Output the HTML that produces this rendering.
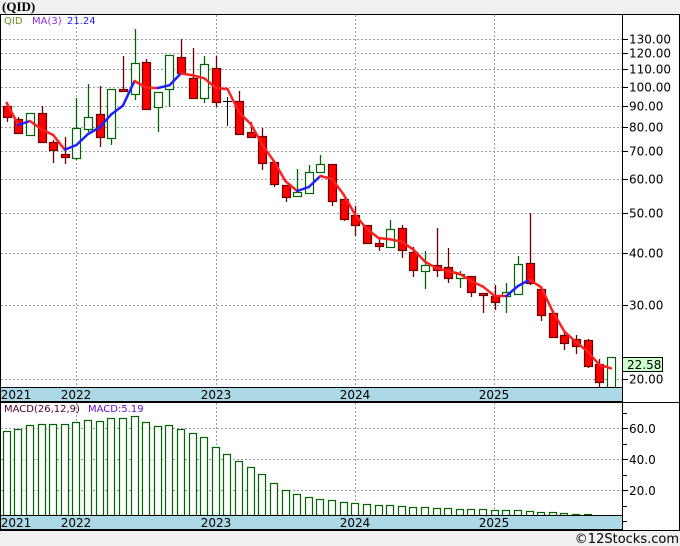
<!DOCTYPE html>
<html><head><meta charset="utf-8"><style>
html,body{margin:0;padding:0;background:#f0f0f0;}
svg{display:block;font-family:"DejaVu Sans","Liberation Sans",sans-serif;}
</style></head><body>
<svg id="s" width="680" height="546" xmlns="http://www.w3.org/2000/svg">
<rect x="0" y="0" width="680" height="546" fill="#f0f0f0"/>
<text x="2" y="11" font-size="13" font-weight="bold" font-family="Liberation Serif, serif" fill="#000">(QID)</text>
<rect x="0.5" y="14.5" width="679" height="516" fill="#fff" stroke="#000"/>
<g id="grid"></g>
<g id="cnd"></g>
<g id="ma"></g>
<g id="macd"></g>
<line x1="622.5" y1="14" x2="622.5" y2="531" stroke="#000"/>
<line x1="0" y1="402.5" x2="680" y2="402.5" stroke="#000"/>
<rect x="0.5" y="387.5" width="622" height="14" fill="#add8e6" stroke="#000"/>
<rect x="0.5" y="515.5" width="622" height="14" fill="#add8e6" stroke="#000"/>
<g id="ax" font-size="12" fill="#000"></g>
<text x="4" y="412" font-size="10" fill="#4b0030">MACD(26,12,9)</text>
<text x="88" y="412" font-size="10" fill="#6a0dcc">MACD:5.19</text>
<text x="4" y="24" font-size="10" fill="#6b8e23">QID</text>
<text x="32" y="24" font-size="10" fill="#8a2be2">MA(3)</text>
<text x="67" y="24" font-size="10" fill="#2020ff">21.24</text>
<rect x="622.5" y="357.5" width="40" height="14" fill="#ccffcc" stroke="#000"/>
<text x="627" y="369" font-size="12">22.58</text>
<text x="679" y="543" font-size="13" text-anchor="end" fill="#000">©12Stocks.com</text>
</svg>
<script>
var NS="http://www.w3.org/2000/svg";
function el(p,t,a,txt){var e=document.createElementNS(NS,t);for(var k in a)e.setAttribute(k,a[k]);if(txt)e.textContent=txt;document.getElementById(p).appendChild(e);return e;}
function Y(p){return 379-418.3*Math.log10(p/20);}
var lv=[130,120,110,100,90,80,70,60,50,40,30,20];
lv.forEach(function(p){var y=Math.round(Y(p))+0.5;el('grid','line',{x1:1,y1:y,x2:622,y2:y,stroke:'#999','stroke-dasharray':'2,2'});
el('grid','line',{x1:622,y1:y,x2:628,y2:y,stroke:'#000'});el('ax','text',{x:629,y:y+4},p.toFixed(2));});
[428,459,490].forEach(function(y,i){el('grid','line',{x1:1,y1:y+.5,x2:622,y2:y+.5,stroke:'#999','stroke-dasharray':'2,2'});el('grid','line',{x1:622,y1:y+.5,x2:628,y2:y+.5,stroke:'#000'});el('ax','text',{x:629,y:y+5},['60.0','40.0','20.0'][i]);});
[413,444,475,506,521].forEach(function(y){el('grid','line',{x1:622,y1:y+.5,x2:627,y2:y+.5,stroke:'#000'});});
[76,216,355,494].forEach(function(x){el('grid','line',{x1:x+.5,y1:15,x2:x+.5,y2:530,stroke:'#999','stroke-dasharray':'2,2'});});
var yrs=[[16,'2021'],[76,'2022'],[216,'2023'],[355,'2024'],[494,'2025']];
yrs.forEach(function(a){el('ax','text',{x:a[0],y:399,'text-anchor':'middle'},a[1]);el('ax','text',{x:a[0],y:527,'text-anchor':'middle'},a[1]);});
var C=[['r',106,117,102,122],['r',119,133,117,133],['g',113,135,113,135],['r',113,142,106,142],['r',142,150,140,163],['r',154,157,137,164],['g',128,158,98,160],['g',117,129,84,132],['r',114,137,86,147],['g',89,138,89,145],['r',89,91,56,91],['g',63,94,29,100],['r',62,109,59,110],['g',92,107,92,132],['g',55,89,55,107],['r',57,73,39,73],['r',78,98,48,98],['g',64,98,56,103],['r',68,102,56,107],['k',101,101,97,126],['r',101,134,91,134],['r',132,137,122,137],['r',136,163,128,170],['r',162,184,162,187],['r',185,197,185,202],['g',192,196,169,197],['g',172,193,165,194],['g',164,172,155,172],['r',164,201,164,206],['r',199,219,199,221],['r',215,225,206,236],['r',225,243,225,244],['r',243,246,238,251],['g',229,247,220,248],['r',228,250,225,258],['r',252,270,247,277],['g',265,271,251,289],['r',265,270,228,277],['r',267,278,248,283],['g',274,278,271,288],['r',276,292,276,297],['r',293,294,293,313],['r',296,302,285,310],['g',292,296,283,313],['g',264,294,256,295],['r',263,283,213,285],['r',289,315,289,321],['r',313,337,313,338],['r',335,343,333,350],['r',339,346,335,354],['r',340,366,339,368],['r',364,382,359,387],['g',357,387,357,387]];
var X=function(i){return 6.7+11.62*i;};
var closes=[];
C.forEach(function(c,i){var x=Math.round(X(i));
 if(c[0]=='k'){el('cnd','line',{x1:x+.5,y1:c[3],x2:x+.5,y2:c[4],stroke:'#000'});el('cnd','line',{x1:x-4,y1:c[1]+.5,x2:x+5,y2:c[1]+.5,stroke:'#000'});closes.push(c[1]);return;}
 var col=c[0]=='r'?'#6b0000':'#006400';
 el('cnd','line',{x1:x+.5,y1:c[3],x2:x+.5,y2:c[4],stroke:col,'stroke-width':1.3});
 el('cnd','rect',{x:x-3.5,y:c[1]+.5,width:8,height:Math.max(2,c[2]-c[1]),fill:c[0]=='r'?'#ff0000':'#fff',stroke:col,'stroke-width':1.2});
 closes.push(c[0]=='r'?c[2]:c[1]);});
var ma=[];for(var i=0;i<closes.length;i++){var s=0,n=0;for(var j=Math.max(0,i-2);j<=i;j++){s+=closes[j];n++;}ma.push(s/n);}
ma[0]=103;
for(var i=1;i<ma.length;i++){el('ma','line',{x1:X(i-1),y1:ma[i-1],x2:X(i),y2:ma[i],stroke:ma[i]<ma[i-1]-0.5?'#1f1fff':'#ff1f1f','stroke-width':2.5,'stroke-linecap':'round'});}
var M=[431,429,425,424,424,424,422,420,421,418,418,416,422,426,425,429,433,437,447,454,461,467,474,483,490,494,497,499,500,502,503,504,505,505,506,507,507,508,508,509,509,509,510,510,510,511,512,512,513,514,514];
M.forEach(function(t,i){var x=Math.round(X(i));el('macd','rect',{x:x-3.5,y:t+.5,width:7,height:515-t,fill:'#fff',stroke:'#006400','stroke-width':1.2});});
</script>
</body></html>
